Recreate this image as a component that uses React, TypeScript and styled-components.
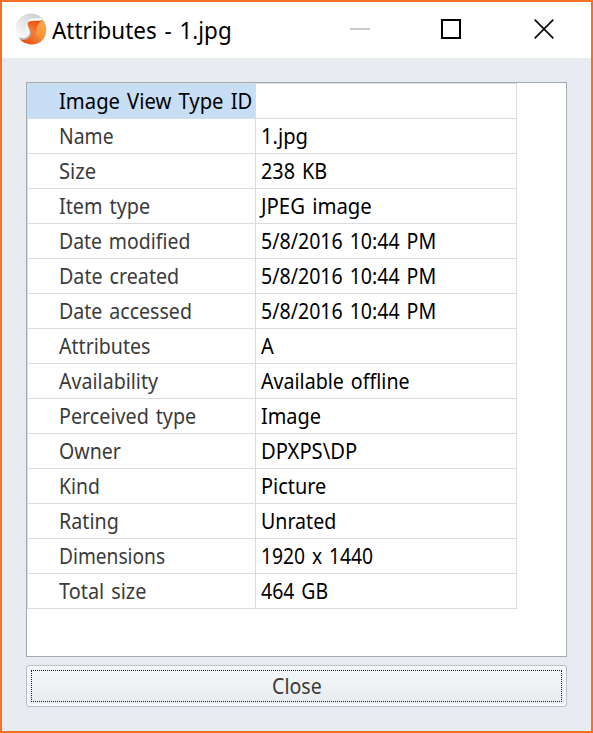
import React from "react";
import styled, { createGlobalStyle } from "styled-components";

const GlobalStyle = createGlobalStyle`
  * { box-sizing: border-box; }
  body { margin: 0; font-family: "Noto Sans", "Open Sans", sans-serif; }
`;

const Window = styled.div`
  width: 593px;
  height: 733px;
  display: flex;
  flex-direction: column;
  border: 2px solid #f37121;
  background: #e8ebf0;
  overflow: hidden;
`;

const TitleBar = styled.header`
  height: 56px;
  flex: none;
  display: flex;
  align-items: flex-start;
  background: #fff;
  padding-left: 13px;
`;

const Logo = styled.svg`
  width: 32px;
  height: 32px;
  margin-top: 11px;
  flex: none;
`;

const Title = styled.h1`
  margin: 11px 0 0 5px;
  width: 280px;
  font-size: 23px;
  line-height: 34px;
  font-weight: 400;
  word-spacing: 2px;
  color: #000;
  white-space: pre;
`;

const Controls = styled.div`
  display: flex;
  margin: 17px 0 0 18px;
`;

const ControlIcon = styled.svg`
  width: 20px;
  height: 20px;
  display: block;
  margin-right: 71px;

  &:last-child {
    margin: 0 0 0 2px;
  }
`;

const Body = styled.main`
  flex: 1;
  display: flex;
  flex-direction: column;
  gap: 8px;
  padding: 24px;
`;

const Panel = styled.section`
  height: 575px;
  background: #fff;
  border: 1px solid #a2aab6;
`;

const Grid = styled.div`
  width: 490px;
  border: 1px solid #d9dce0;
  border-bottom: 0;
`;

const Row = styled.div`
  display: grid;
  grid-template-columns: 228px 260px;
  height: 35px;
  border-bottom: 1px solid #d9dce0;
  font-size: 22px;
  line-height: 33px;
  white-space: pre;
`;

const Label = styled.div<{ $selected?: boolean }>`
  height: 34px;
  padding-left: 31px;
  border-right: 1px solid #d9dce0;
  color: ${(p) => (p.$selected ? "#000" : "#3b3b3b")};
  background: ${(p) => (p.$selected ? "#c7def5" : "transparent")};
`;

const Value = styled.div`
  height: 34px;
  padding-left: 5px;
  color: #000;
`;

const Condensed = styled.span<{ $scale: number; $center?: boolean }>`
  display: inline-block;
  word-spacing: 2px;
  transform: scaleX(${(p) => p.$scale});
  transform-origin: ${(p) => (p.$center ? "center" : "left")};
`;

const CloseButton = styled.button`
  height: 42px;
  padding: 4px;
  border: 1px solid #b8bec5;
  border-radius: 3px;
  background: linear-gradient(#f3f7f9, #e8ecef);
  box-shadow: inset 0 0 0 2px #fbfcfd;
  font: inherit;
  font-size: 22px;
  color: #3b3b3b;
`;

const FocusRing = styled.span`
  display: block;
  height: 32px;
  border: 1px dotted #222;
  line-height: 28px;
`;

type Item = { name: string; value: string; nameScale: number; valueScale: number };

const items: Item[] = [
  { name: "Image View Type ID", value: "", nameScale: 0.92, valueScale: 1 },
  { name: "Name", value: "1.jpg", nameScale: 0.88, valueScale: 0.918 },
  { name: "Size", value: "238 KB", nameScale: 0.918, valueScale: 0.9 },
  { name: "Item type", value: "JPEG image", nameScale: 0.9, valueScale: 0.925 },
  { name: "Date modified", value: "5/8/2016 10:44 PM", nameScale: 0.883, valueScale: 0.89 },
  { name: "Date created", value: "5/8/2016 10:44 PM", nameScale: 0.895, valueScale: 0.89 },
  { name: "Date accessed", value: "5/8/2016 10:44 PM", nameScale: 0.89, valueScale: 0.89 },
  { name: "Attributes", value: "A", nameScale: 0.89, valueScale: 0.91 },
  { name: "Availability", value: "Available offline", nameScale: 0.892, valueScale: 0.893 },
  { name: "Perceived type", value: "Image", nameScale: 0.897, valueScale: 0.905 },
  { name: "Owner", value: "DPXPS\\DP", nameScale: 0.89, valueScale: 0.918 },
  { name: "Kind", value: "Picture", nameScale: 0.88, valueScale: 0.905 },
  { name: "Rating", value: "Unrated", nameScale: 0.895, valueScale: 0.89 },
  { name: "Dimensions", value: "1920 x 1440", nameScale: 0.87, valueScale: 0.877 },
  { name: "Total size", value: "464 GB", nameScale: 0.904, valueScale: 0.885 },
];

function AppLogo() {
  return (
    <Logo viewBox="0 0 32 32">
      <defs>
        <linearGradient id="disc" x1="0.7" y1="0" x2="0.2" y2="0.8">
          <stop offset="0" stopColor="#cdd0d1" />
          <stop offset="0.5" stopColor="#e4e6e7" />
          <stop offset="1" stopColor="#fafafa" />
        </linearGradient>
        <linearGradient id="ribbon" x1="0.7" y1="0" x2="0.2" y2="1">
          <stop offset="0" stopColor="#e8540f" />
          <stop offset="0.5" stopColor="#f37f38" />
          <stop offset="1" stopColor="#e8501a" />
        </linearGradient>
        <linearGradient id="glow" x1="1" y1="0" x2="0.3" y2="1">
          <stop offset="0" stopColor="#f6a85a" />
          <stop offset="0.5" stopColor="#f9983a" />
          <stop offset="1" stopColor="#e44f18" />
        </linearGradient>
      </defs>
      <circle cx="16" cy="16" r="15.5" fill="url(#disc)" />
      <path d="M27.500 7C33 13 32.500 23 26 28.500C20 33 10 32.500 5 26C14 27 17 23 18 18C20 12 22 8 27.500 7Z" fill="url(#glow)" />
      <path d="M27.500 7C22.500 10 21.500 15 21 20C20 27 14 30 8 29L4.500 25C10 27 14 24 15 20C16 16 11 12 13 9C15 7 21 8 27.500 7Z" fill="url(#ribbon)" />
      <path d="M12 10C11 15 15 18 13 22C11 25.500 7 25.500 4 24C4.500 26 6 27 8 27C14 27 17 22 15.500 18C14.500 15 12.500 13 12 10Z" fill="#b9b3b1" />
      <path d="M12 9C9 14 13 17 12 20C11 23.500 8 25 4 24C8 26.500 13 25 14.500 21C15.500 17 12 14 12 9Z" fill="#f4f4f4" />
      <path d="M12 11C13 6 20 8.500 27.500 7L26 5C21 6.500 13 3.500 12 11Z" fill="#fff" />
    </Logo>
  );
}

export default function App() {
  return (
    <>
      <GlobalStyle />
      <Window>
        <TitleBar>
          <AppLogo />
          <Title><Condensed $scale={0.975}>Attributes - 1.jpg</Condensed></Title>
          <Controls>
            <ControlIcon viewBox="0 0 20 20"><path d="M0 10H20" stroke="#ccc" strokeWidth="2" /></ControlIcon>
            <ControlIcon viewBox="0 0 20 20"><rect x="1" y="1" width="18" height="18" fill="none" stroke="#000" strokeWidth="2" /></ControlIcon>
            <ControlIcon viewBox="0 0 20 20"><path d="M.7 .7L19.300 19.300M19.300 .7L.7 19.300" stroke="#111" strokeWidth="1.800" /></ControlIcon>
          </Controls>
        </TitleBar>
        <Body>
          <Panel>
            <Grid>
              {items.map((item, i) => (
                <Row key={item.name}>
                  <Label $selected={i === 0}><Condensed $scale={item.nameScale}>{item.name}</Condensed></Label>
                  <Value><Condensed $scale={item.valueScale}>{item.value}</Condensed></Value>
                </Row>
              ))}
            </Grid>
          </Panel>
          <CloseButton type="button">
            <FocusRing><Condensed $scale={0.89} $center>Close</Condensed></FocusRing>
          </CloseButton>
        </Body>
      </Window>
    </>
  );
}
